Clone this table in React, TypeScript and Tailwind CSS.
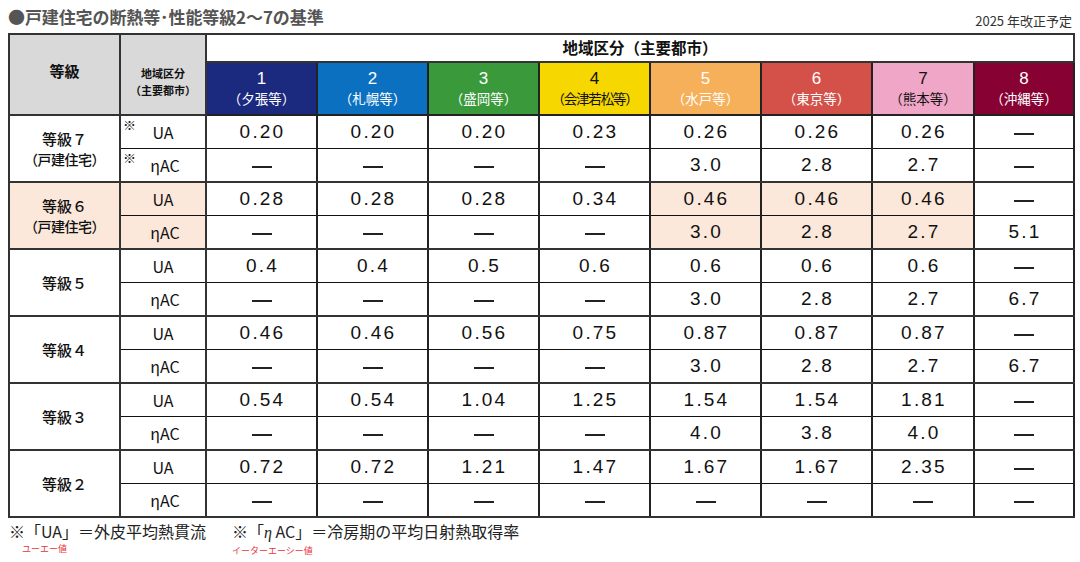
import React from "react";

const JP = "font-['Noto_Sans_CJK_JP',sans-serif]";

type Region = { n: string; name: string; bg: string; fg: string; nameCls?: string };
const regions: Region[] = [
  { n: "1", name: "（夕張等）", bg: "bg-[#1b2a7f]", fg: "text-white" },
  { n: "2", name: "（札幌等）", bg: "bg-[#0a70bf]", fg: "text-white" },
  { n: "3", name: "（盛岡等）", bg: "bg-[#3a993b]", fg: "text-white" },
  { n: "4", name: "（会津若松等）", bg: "bg-[#f6d800]", fg: "text-[#111]", nameCls: "tracking-[-1.2px]" },
  { n: "5", name: "（水戸等）", bg: "bg-[#f6b05a]", fg: "text-white" },
  { n: "6", name: "（東京等）", bg: "bg-[#d4514a]", fg: "text-white" },
  { n: "7", name: "（熊本等）", bg: "bg-[#f0a6c6]", fg: "text-[#111]" },
  { n: "8", name: "（沖縄等）", bg: "bg-[#870233]", fg: "text-white" },
];

type Group = {
  label: string;
  sub?: string;
  ua: string[];
  ac: string[];
  note?: boolean;
  hl?: boolean;
};

const D = "—";
const groups: Group[] = [
  { label: "等級７", sub: "（戸建住宅）", note: true, ua: ["0.20", "0.20", "0.20", "0.23", "0.26", "0.26", "0.26", D], ac: [D, D, D, D, "3.0", "2.8", "2.7", D] },
  { label: "等級６", sub: "（戸建住宅）", hl: true, ua: ["0.28", "0.28", "0.28", "0.34", "0.46", "0.46", "0.46", D], ac: [D, D, D, D, "3.0", "2.8", "2.7", "5.1"] },
  { label: "等級５", ua: ["0.4", "0.4", "0.5", "0.6", "0.6", "0.6", "0.6", D], ac: [D, D, D, D, "3.0", "2.8", "2.7", "6.7"] },
  { label: "等級４", ua: ["0.46", "0.46", "0.56", "0.75", "0.87", "0.87", "0.87", D], ac: [D, D, D, D, "3.0", "2.8", "2.7", "6.7"] },
  { label: "等級３", ua: ["0.54", "0.54", "1.04", "1.25", "1.54", "1.54", "1.81", D], ac: [D, D, D, D, "4.0", "3.8", "4.0", D] },
  { label: "等級２", ua: ["0.72", "0.72", "1.21", "1.47", "1.67", "1.67", "2.35", D], ac: [D, D, D, D, D, D, D, D] },
];

const Val = ({ v }: { v: string }) =>
  v === D ? (
    <span className="inline-block w-[20px] h-[2px] bg-[#222] align-middle" />
  ) : (
    <span className="font-['Liberation_Sans',sans-serif] text-[19px] tracking-[2.2px] pl-[2px]">{v}</span>
  );

export default function App() {
  return (
    <div className={`w-[1080px] h-[562px] bg-white ${JP} text-[#111] relative`}>
      <div className="flex items-end justify-between px-[8px] h-[33px] pb-[4px]">
        <div className="text-[17px] font-bold text-[#555] leading-none mb-[4px] tracking-[-0.1px]">
          ●戸建住宅の断熱等･性能等級2〜7の基準
        </div>
        <div className="text-[13px] text-[#333] leading-none mb-[2px] mr-[0px]">2025 年改正予定</div>
      </div>
      <table className="ml-[8px] table-fixed border-collapse border-2 border-[#333] w-[1065px]">
        <colgroup>
          <col className="w-[111px]" />
          <col className="w-[86px]" />
          <col className="w-[111px]" />
          <col className="w-[111px]" />
          <col className="w-[111px]" />
          <col className="w-[111px]" />
          <col className="w-[111px]" />
          <col className="w-[111px]" />
          <col className="w-[102px]" />
          <col className="w-[100px]" />
        </colgroup>
        <thead>
          <tr className="h-[28px]">
            <th rowSpan={2} className="bg-[#d9d9d9] border-2 border-[#333] text-[15px] font-bold align-middle pb-[6px]">
              等級
            </th>
            <th rowSpan={2} className="bg-[#d9d9d9] border-2 border-[#333] text-[11px] font-bold leading-[17px] pt-[14px]">
              地域区分
              <br />
              （主要都市）
            </th>
            <th colSpan={8} className="bg-white border-2 border-[#333] text-[15.5px] font-bold leading-none">
              地域区分（主要都市）
            </th>
          </tr>
          <tr className="h-[53px]">
            {regions.map((r) => (
              <th key={r.n} className={`${r.bg} ${r.fg} border-2 border-[#222] font-normal leading-none`}>
                <div className="font-['Liberation_Sans',sans-serif] text-[17px] leading-[19px]">{r.n}</div>
                <div className={`text-[13.5px] leading-[20px] ${r.nameCls ?? ""}`}>{r.name}</div>
              </th>
            ))}
          </tr>
        </thead>
        <tbody>
          {groups.map((g, gi) => {
            const hlCell = (i: number) => (g.hl && i >= 4 && i <= 6 ? "bg-[#fce8db]" : "bg-white");
            return (
              <React.Fragment key={gi}>
                <tr className="h-[33px]">
                  <td
                    rowSpan={2}
                    className={`border-2 border-[#333] text-center align-middle text-[15px] font-medium leading-[21px] ${g.hl ? "bg-[#fce8db]" : "bg-white"}`}
                  >
                    <div>{g.label}</div>
                    {g.sub && <div className="text-[14px] tracking-[-0.5px]">{g.sub}</div>}
                  </td>
                  <td
                    className={`relative border-x-2 border-t-2 border-b border-x-[#333] border-t-[#333] border-b-[#111] text-center text-[16px] leading-none ${g.hl ? "bg-[#fce8db]" : "bg-white"}`}
                  >
                    {g.note && <span className="absolute left-[2px] top-[2px] text-[13px] leading-none">※</span>}
                    UA
                  </td>
                  {g.ua.map((v, i) => (
                    <td key={i} className={`border-x-2 border-t-2 border-b border-x-[#222] border-t-[#333] border-b-[#111] text-center leading-none ${hlCell(i)}`}>
                      <Val v={v} />
                    </td>
                  ))}
                </tr>
                <tr className="h-[34px]">
                  <td
                    className={`relative border-x-2 border-b-2 border-t border-x-[#333] border-b-[#333] border-t-[#111] text-center text-[16px] leading-none ${g.hl ? "bg-[#fce8db]" : "bg-white"}`}
                  >
                    {g.note && <span className="absolute left-[2px] top-[2px] text-[13px] leading-none">※</span>}
                    <span className="pl-[4px]">η</span>AC
                  </td>
                  {g.ac.map((v, i) => (
                    <td key={i} className={`border-x-2 border-b-2 border-t border-x-[#222] border-b-[#333] border-t-[#111] text-center leading-none ${hlCell(i)}`}>
                      <Val v={v} />
                    </td>
                  ))}
                </tr>
              </React.Fragment>
            );
          })}
        </tbody>
      </table>
      <div className="flex px-[9px] mt-[3px] text-[16px] leading-[20px] text-[#222]">
        <div className="flex flex-col">
          <span>※「UA」＝外皮平均熱貫流</span>
          <span className="text-[9px] leading-[12px] text-[#e8323c] ml-[13px] mt-[2px]">ユーエー値</span>
        </div>
        <div className="flex flex-col ml-[26px]">
          <span>
            ※「<span className="font-['Liberation_Serif',serif] italic">η</span> AC」＝冷房期の平均日射熱取得率
          </span>
          <span className="text-[9px] leading-[12px] text-[#e8323c] mt-[2px]">イーターエーシー値</span>
        </div>
      </div>
    </div>
  );
}
